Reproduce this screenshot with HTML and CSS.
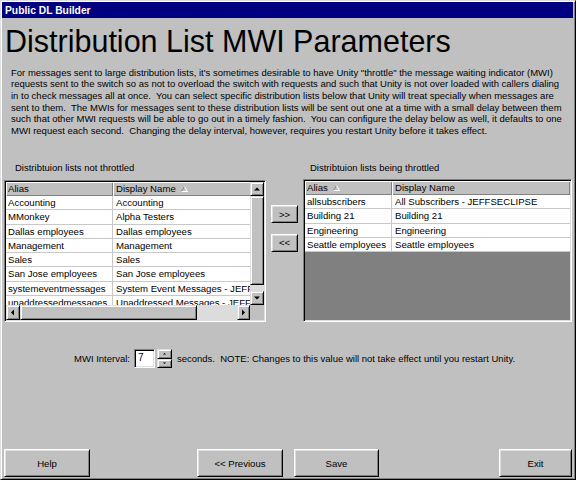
FILE: index.html
```html
<!DOCTYPE html>
<html>
<head>
<meta charset="utf-8">
<link rel="stylesheet" href="styles.css">
</head>
<body>
<div class="window">
  <div class="titlebar">Public DL Builder</div>
  <h1 class="heading">Distribution List MWI Parameters</h1>
  <p class="intro">For messages sent to large distribution lists, it's sometimes desirable to have Unity "throttle" the message waiting indicator (MWI)
requests sent to the switch so as not to overload the switch with requests and such that Unity is not over loaded with callers dialing
in to check messages all at once.  You can select specific distribution lists below that Unity will treat specially when messages are
sent to them.  The MWIs for messages sent to these distribution lists will be sent out one at a time with a small delay between them
such that other MWI requests will be able to go out in a timely fashion.  You can configure the delay below as well, it defaults to one
MWI request each second.  Changing the delay interval, however, requires you restart Unity before it takes effect.</p>

  <div class="lists">
    <div class="group group-left">
      <div class="label label-left">Distribtuion lists not throttled</div>
      <div class="listview lv-left">
        <div class="lv-grid">
          <div class="lv-view">
            <div class="lv-row lv-head cols-left">
              <div class="hcell">Alias</div>
              <div class="hcell">Display Name<svg class="sort" width="7" height="6" viewBox="0 0 7 6"><path d="M0.5 5.5 L3.5 0.5" stroke="#808080" fill="none"/><path d="M3.5 0.5 L6.5 5.5 L0.5 5.5" stroke="#fff" fill="none"/></svg></div>
            </div>
            <div class="lv-row cols-left"><div class="cell c1">Accounting</div><div class="cell">Accounting</div></div>
            <div class="lv-row cols-left"><div class="cell c1">MMonkey</div><div class="cell">Alpha Testers</div></div>
            <div class="lv-row cols-left"><div class="cell c1">Dallas employees</div><div class="cell">Dallas employees</div></div>
            <div class="lv-row cols-left"><div class="cell c1">Management</div><div class="cell">Management</div></div>
            <div class="lv-row cols-left"><div class="cell c1">Sales</div><div class="cell">Sales</div></div>
            <div class="lv-row cols-left"><div class="cell c1">San Jose employees</div><div class="cell">San Jose employees</div></div>
            <div class="lv-row cols-left"><div class="cell c1">systemeventmessages</div><div class="cell">System Event Messages - JEFFSECLIPSE</div></div>
            <div class="lv-row cols-left"><div class="cell c1">unaddressedmessages</div><div class="cell">Unaddressed Messages - JEFFSECLIPSE</div></div>
          </div>
          <div class="vscroll">
            <div class="sbtn sbtn-v"><svg width="12" height="12" viewBox="0 0 12 12"><polygon points="3,7.5 9,7.5 6,4.5" fill="#000"/></svg></div>
            <div class="thumb thumb-v"></div>
            <div class="track track-v"></div>
            <div class="sbtn sbtn-v"><svg width="12" height="12" viewBox="0 0 12 12"><polygon points="3,4.5 9,4.5 6,7.5" fill="#000"/></svg></div>
          </div>
          <div class="hscroll">
            <div class="sbtn sbtn-hl"><svg width="12" height="13" viewBox="0 0 12 13"><polygon points="7,3.5 7,9.5 4,6.5" fill="#000"/></svg></div>
            <div class="thumb thumb-h"></div>
            <div class="track track-h"></div>
            <div class="sbtn sbtn-hr"><svg width="11" height="13" viewBox="0 0 11 13"><polygon points="4,3.5 4,9.5 7,6.5" fill="#000"/></svg></div>
          </div>
          <div class="corner"></div>
        </div>
      </div>
    </div>

    <div class="movers">
      <button class="btn btn-move">&gt;&gt;</button>
      <button class="btn btn-move">&lt;&lt;</button>
    </div>

    <div class="group group-right">
      <div class="label label-right">Distribtuion lists being throttled</div>
      <div class="listview lv-right">
        <div class="lv-view lv-view-right">
          <div class="lv-row lv-head cols-right">
            <div class="hcell">Alias<svg class="sort" width="7" height="6" viewBox="0 0 7 6"><path d="M0.5 5.5 L3.5 0.5" stroke="#808080" fill="none"/><path d="M3.5 0.5 L6.5 5.5 L0.5 5.5" stroke="#fff" fill="none"/></svg></div>
            <div class="hcell">Display Name</div>
          </div>
          <div class="lv-row cols-right"><div class="cell c1">allsubscribers</div><div class="cell">All Subscribers - JEFFSECLIPSE</div></div>
          <div class="lv-row cols-right"><div class="cell c1">Building 21</div><div class="cell">Building 21</div></div>
          <div class="lv-row cols-right"><div class="cell c1">Engineering</div><div class="cell">Engineering</div></div>
          <div class="lv-row cols-right"><div class="cell c1">Seattle employees</div><div class="cell">Seattle employees</div></div>
        </div>
      </div>
    </div>
  </div>

  <div class="interval">
    <span class="int-label">MWI Interval:</span>
    <div class="spin-input">7</div>
    <div class="spinner">
      <div class="spin-btn"><svg width="13" height="7" viewBox="0 0 13 7"><polygon points="5,4.5 8,4.5 6.5,3" fill="#000"/></svg></div>
      <div class="spin-btn"><svg width="13" height="7" viewBox="0 0 13 7"><polygon points="5,2.5 8,2.5 6.5,4" fill="#000"/></svg></div>
    </div>
    <span class="int-note">seconds.  NOTE: Changes to this value will not take effect until you restart Unity.</span>
  </div>

  <div class="actions">
    <button class="btn btn-act btn-help">Help</button>
    <button class="btn btn-act btn-prev">&lt;&lt; Previous</button>
    <button class="btn btn-act btn-save">Save</button>
    <button class="btn btn-act btn-exit">Exit</button>
  </div>
</div>
</body>
</html>
```

FILE: styles.css
```css
html, body {
  margin: 0;
  padding: 0;
  background: #c0c0c0;
}

body {
  font-family: "Liberation Sans", Arial, sans-serif;
  font-size: 9.5px;
  color: #000;
}

.window {
  width: 576px;
  height: 480px;
  box-sizing: border-box;
  border: 1px solid;
  border-color: #dfdfdf #000 #000 #dfdfdf;
  box-shadow: inset 1px 1px #fff, inset -1px -1px #808080;
  padding: 1px;
  display: flex;
  flex-direction: column;
  background: #c0c0c0;
  overflow: hidden;
}

.titlebar {
  height: 15px;
  padding-top: 1px;
  line-height: 15px;
  padding-left: 3px;
  margin-right: 1px;
  background: #000080;
  color: #fff;
  font-weight: bold;
  font-size: 10.3px;
  flex: none;
}

.heading {
  margin: 6px 0 0;
  padding-left: 3px;
  font-size: 30.5px;
  line-height: 34px;
  font-weight: normal;
  flex: none;
}

.intro {
  margin: 8.5px 0 0;
  padding-left: 9px;
  font-size: 9.5px;
  line-height: 11.7px;
  white-space: pre;
  flex: none;
}

.lists {
  margin-top: 25.3px;
  display: flex;
  align-items: flex-start;
  flex: none;
}

.group-left {
  margin-left: 2px;
  width: 262px;
}

.group-right {
  margin-left: 5px;
  width: 269px;
}

.label {
  height: 11.7px;
  line-height: 11.7px;
  white-space: nowrap;
}

.label-left { padding-left: 11px; }
.label-right { padding-left: 7px; }

.listview {
  box-sizing: border-box;
  border: 1px solid;
  border-color: #808080 #fff #fff #808080;
  box-shadow: inset 1px 1px #000, inset -1px -1px #dfdfdf;
  padding: 1px;
  background: #fff;
}

.lv-left {
  margin-top: 6.3px;
  width: 262px;
  height: 142px;
}

.lv-right {
  margin-top: 5.3px;
  width: 269px;
  height: 143px;
}

.lv-grid {
  display: grid;
  grid-template-columns: 244px 14px;
  grid-template-rows: 123px 15px;
  height: 138px;
}

.lv-view {
  overflow: hidden;
  background: #fff;
}

.lv-view-right {
  height: 100%;
  background: #808080;
}

.lv-row {
  display: grid;
  height: 14.3px;
  box-sizing: border-box;
  background: #fff;
  border-bottom: 1px solid #c8c8c8;
  font-size: 9.6px;
}

.lv-head {
  height: 14px;
  background: #c0c0c0;
  border-bottom: 0;
}

.cols-left { grid-template-columns: 107px 190px; }
.cols-right { grid-template-columns: 87px 1fr; }

.hcell {
  box-shadow: inset 1px 1px #fff, inset -1px -1px #808080;
  line-height: 14px;
  padding-left: 2px;
  white-space: nowrap;
  overflow: hidden;
  display: flex;
  align-items: center;
}

.hcell + .hcell { padding-left: 3px; }

.sort {
  margin-left: 5px;
  flex: none;
}

.cell {
  line-height: 13.3px;
  padding-left: 3px;
  white-space: nowrap;
  overflow: hidden;
}

.cell.c1 {
  padding-left: 2px;
  border-right: 1px solid #c8c8c8;
}

.sbtn, .thumb, .spin-btn {
  box-sizing: border-box;
  background: #c0c0c0;
  border: 1px solid;
  border-color: #dfdfdf #000 #000 #dfdfdf;
  box-shadow: inset 1px 1px #fff, inset -1px -1px #808080;
  display: flex;
  align-items: center;
  justify-content: center;
  overflow: hidden;
}

.vscroll {
  display: flex;
  flex-direction: column;
}

.sbtn-v { height: 14px; flex: none; }
.thumb-v { height: 89px; flex: none; }
.track-v { height: 6px; flex: none; }

.track {
  background: #dcdcdc;
}

.hscroll {
  display: flex;
}

.sbtn-hl { width: 14px; flex: none; }
.thumb-h { width: 177px; flex: none; }
.track-h { width: 40px; flex: none; }
.sbtn-hr { width: 13px; flex: none; }

.corner {
  background: #c0c0c0;
}

.movers {
  margin-left: 5px;
  width: 27px;
  padding-top: 43px;
  display: flex;
  flex-direction: column;
  gap: 10.5px;
}

.btn {
  box-sizing: border-box;
  margin: 0;
  padding: 0;
  background: #c0c0c0;
  border: 1px solid;
  border-color: #fff #000 #000 #fff;
  box-shadow: inset 1px 1px #dfdfdf, inset -1px -1px #808080;
  font-family: "Liberation Sans", Arial, sans-serif;
  font-size: 9.6px;
  color: #000;
  display: flex;
  align-items: center;
  justify-content: center;
}

.btn-move {
  width: 27px;
  height: 18px;
}

.interval {
  margin-top: 27px;
  height: 19px;
  padding-left: 72px;
  display: flex;
  align-items: center;
  flex: none;
}

.int-label {
  margin-right: 4px;
  white-space: nowrap;
}

.spin-input {
  box-sizing: border-box;
  width: 21px;
  height: 19px;
  border: 1px solid;
  border-color: #808080 #fff #fff #808080;
  box-shadow: inset 1px 1px #000, inset -1px -1px #dfdfdf;
  background: #fff;
  padding-left: 3px;
  line-height: 16px;
  font-size: 10px;
}

.spinner {
  margin-left: 2px;
  width: 15px;
  height: 19px;
  display: flex;
  flex-direction: column;
}

.spin-btn {
  height: 9.5px;
  flex: none;
}

.int-note {
  margin-left: 5px;
  white-space: pre;
}

.actions {
  margin-top: auto;
  margin-bottom: 1px;
  height: 28px;
  padding: 0 2px;
  display: flex;
  flex: none;
}

.btn-act { height: 28px; }
.btn-help { width: 86px; }
.btn-prev { width: 86px; margin-left: 107px; }
.btn-save { width: 85px; margin-left: 11px; }
.btn-exit { width: 73px; margin-left: auto; }
```
